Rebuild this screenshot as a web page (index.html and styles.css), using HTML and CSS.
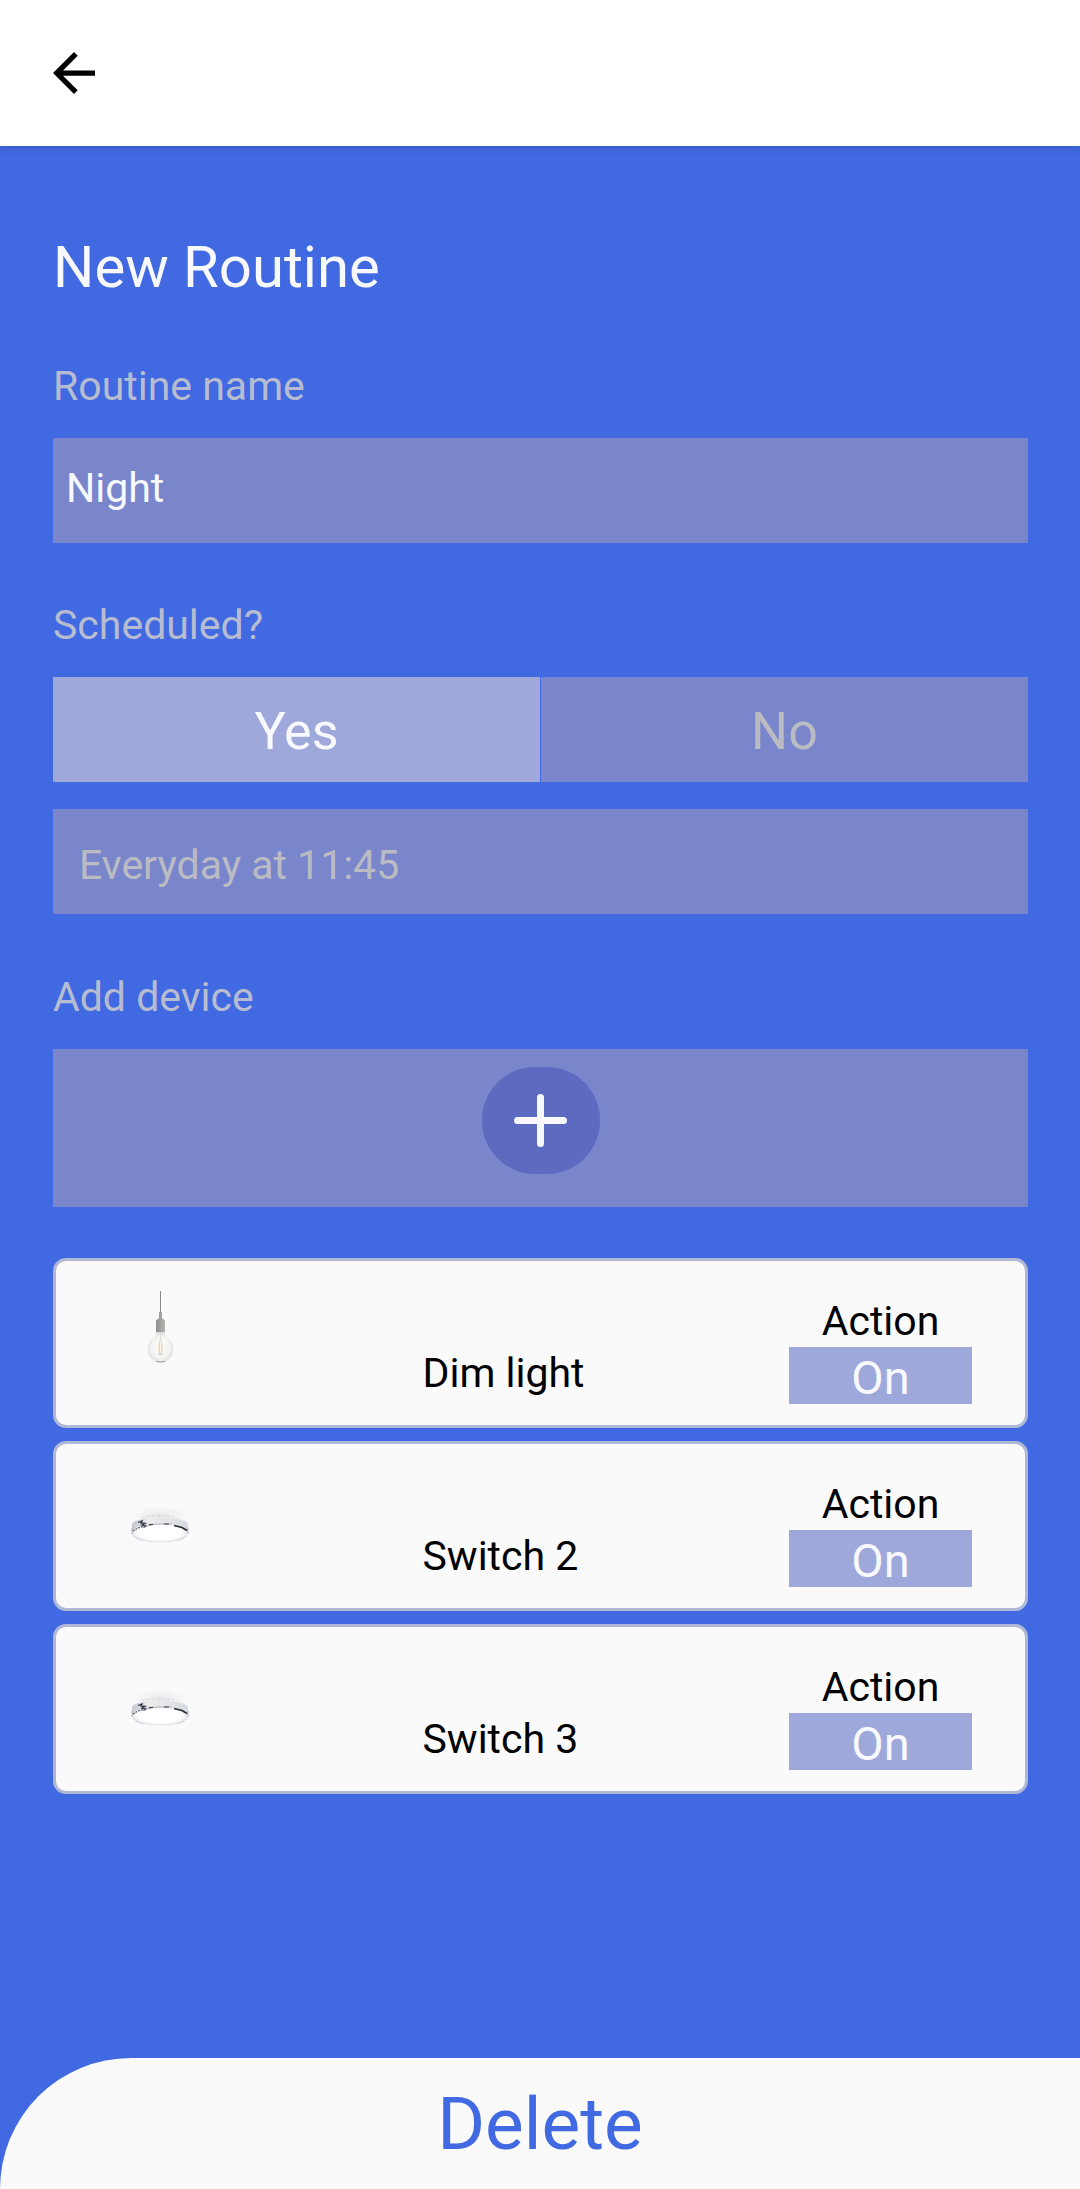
FILE: index.html
```html
<!DOCTYPE html>
<html lang="en">
<head>
<meta charset="utf-8">
<meta name="viewport" content="width=device-width, initial-scale=1">
<title>New Routine</title>
<link rel="stylesheet" href="styles.css">
</head>
<body>
<svg class="defs" aria-hidden="true">
  <defs>
    <linearGradient id="socket" x1="0" x2="1">
      <stop offset="0" stop-color="#8f8f8d"/><stop offset=".6" stop-color="#a5a5a3"/><stop offset="1" stop-color="#b4b4b2"/>
    </linearGradient>
    <radialGradient id="glass">
      <stop offset="0" stop-color="#fdfcf9"/><stop offset=".75" stop-color="#f4f4f3"/><stop offset="1" stop-color="#e2e3e3"/>
    </radialGradient>
    <linearGradient id="rim" x1="0" x2="1">
      <stop offset="0" stop-color="#c4c7ce"/><stop offset=".3" stop-color="#ececef"/><stop offset=".7" stop-color="#e2e4e8"/><stop offset="1" stop-color="#d5d8de"/>
    </linearGradient>
    <radialGradient id="halo">
      <stop offset="0" stop-color="#dedede"/><stop offset="1" stop-color="#fafafa"/>
    </radialGradient>
    <radialGradient id="disc">
      <stop offset="0" stop-color="#fff"/><stop offset=".75" stop-color="#fff"/><stop offset=".92" stop-color="#f1f2f4"/><stop offset="1" stop-color="#dfe3e8"/>
    </radialGradient>
    <symbol id="pendant" viewBox="0 0 72 72">
      <path d="M36.500 0V22" stroke="#8c8c8a" stroke-width="1"/>
      <path d="M35 21h3v6l3 2.500v12h-9v-12l3-2.500z" fill="url(#socket)"/>
      <path d="M32.500 41.500h8c0 3 .5 5 3 6.500 3.500 2 5.300 5.500 5.300 10 0 7.500-5 13-12.300 13s-12.300-5.500-12.300-13c0-4.500 1.800-8 5.300-10 2.500-1.500 3-3.500 3-6.500z" fill="url(#glass)" stroke="#dededd" stroke-width=".6"/>
      <path d="M36.500 42v8M35.500 50v12M37.500 50v12" stroke="#d3cfcb" stroke-width=".8" fill="none"/>
      <path d="M34.500 54v7M38.500 54v7" stroke="#f1dcc2" stroke-width=".8"/>
      <path d="M34.500 63h4" stroke="#b4b0ac" stroke-width="1"/>
      <path d="M32 70.500q4.500 1.200 9 0" stroke="#989898" stroke-width="1" fill="none"/>
    </symbol>
    <symbol id="ceiling" viewBox="0 0 72 72">
      <ellipse cx="36" cy="42" rx="27" ry="10" fill="url(#halo)" opacity=".7"/>
      <path d="M8 50.500q.5-3 8-5 20-4.500 40 0 8 2 8 5v8q-2 6-12 8.500-16 3-32 0Q10 64.500 8 58.500z" fill="url(#rim)"/>
      <ellipse cx="36" cy="58.500" rx="28" ry="9.500" fill="url(#disc)"/>
      <path d="M8 54v6M64 54v6" stroke="#9fa2b0" stroke-width=".8"/>
      <path d="M9 61.500q3 4 10 5.500M63 61.500q-3 4-10 5.500" fill="none" stroke="#b8bbc3" stroke-width=".8" stroke-dasharray="2 1.500"/>
      <path d="M14 48.500l4-1.500-1 2 4 .5-3 1.500 4 1-2.500 1.500" fill="none" stroke="#343747" stroke-width="1.300"/>
      <path d="M9 57l4-2.500M14 54l5-1.500" stroke="#555867" stroke-width="1.200" stroke-dasharray="2 1"/>
      <path d="M22 51.500q7-1.500 14-1.500h12" fill="none" stroke="#a8abb5" stroke-width="1"/>
      <path d="M25 50.800l4-.5M40 50h5" stroke="#3e404b" stroke-width="1.200"/>
      <path d="M50 51.500l8 2 5 3" fill="none" stroke="#252731" stroke-width="1.500"/>
      <path d="M18 43.500q18-3.500 36 0" fill="none" stroke="#c9ccd2" stroke-width=".7" stroke-dasharray="3 2"/>
    </symbol>
  </defs>
</svg>

<header class="topbar">
  <a class="back" href="#" aria-label="Back">
    <svg viewBox="4 4 16 16"><path d="M20 11H7.830l5.590-5.590L12 4l-8 8 8 8 1.410-1.410L7.830 13H20v-2z"/></svg>
  </a>
</header>

<main class="routine">
  <h1 class="title">New Routine</h1>

  <label class="label" for="name">Routine name</label>
  <input class="field field-name" id="name" type="text" value="Night">

  <p class="label" id="scheduled">Scheduled?</p>
  <div class="choice" role="group" aria-labelledby="scheduled">
    <button class="option option-selected" type="button" aria-pressed="true">Yes</button>
    <button class="option" type="button" aria-pressed="false">No</button>
  </div>
  <input class="field field-time" type="text" value="Everyday at 11:45" aria-label="Schedule" readonly>

  <p class="label">Add device</p>
  <div class="add-box">
    <button class="add" type="button" aria-label="Add device">
      <svg viewBox="0 0 53 53" stroke="#f8f8ff" stroke-width="7" stroke-linecap="round"><path d="M26.500 3.500v46M3.500 26.500h46"/></svg>
    </button>
  </div>

  <ul class="devices">
    <li class="device">
      <svg class="picture" aria-hidden="true"><use href="#pendant" width="72" height="72"/></svg>
      <span class="device-name">Dim light</span>
      <div class="action"><span class="action-label">Action</span><button class="toggle" type="button">On</button></div>
    </li>
    <li class="device">
      <svg class="picture" aria-hidden="true"><use href="#ceiling" width="72" height="72"/></svg>
      <span class="device-name">Switch 2</span>
      <div class="action"><span class="action-label">Action</span><button class="toggle" type="button">On</button></div>
    </li>
    <li class="device">
      <svg class="picture" aria-hidden="true"><use href="#ceiling" width="72" height="72"/></svg>
      <span class="device-name">Switch 3</span>
      <div class="action"><span class="action-label">Action</span><button class="toggle" type="button">On</button></div>
    </li>
  </ul>
</main>

<button class="delete" type="button">Delete</button>
</body>
</html>
```
FILE: styles.css
```css
* {
  box-sizing: border-box;
}

body {
  margin: 0;
  min-height: 100vh;
  display: flex;
  flex-direction: column;
  background: #4169e1;
  color: #000;
  font-family: Roboto, sans-serif;
  font-size: 41px;
  line-height: 50px;
}

button,
input {
  margin: 0;
  padding: 0;
  border: 0;
  border-radius: 0;
  font: inherit;
}

.defs {
  position: absolute;
  width: 0;
  height: 0;
}

.topbar {
  display: flex;
  align-items: center;
  height: 146px;
  padding: 0 53px;
  background: #fff;
  box-shadow: 0 1px 9px rgba(0, 0, 0, 0.18);
}

.back,
.back svg {
  display: block;
  width: 42px;
  height: 42px;
}

.routine {
  flex: 1;
  display: flex;
  flex-direction: column;
  padding: 87px 52px 53px 53px;
}

.title {
  margin: 0 0 3px;
  color: #f8f8ff;
  font-size: 58px;
  font-weight: 400;
  line-height: 68px;
}

.label {
  margin: 57px 0 27px;
  color: #b8bcd0;
}

.field {
  width: 100%;
  height: 105px;
  background: #7986cb;
}

.field-name {
  padding: 0 13px 6px;
  color: #f8f8ff;
}

.field-time {
  margin: 27px 0 1px;
  padding: 6px 26px 0;
  color: #bbbbc4;
}

.choice {
  display: grid;
  grid-template-columns: 1fr 1fr;
  gap: 1px;
}

.option {
  height: 105px;
  padding-top: 5px;
  background: #7986cb;
  color: #bbbbc4;
  font-size: 52px;
}

.option-selected {
  background: #9fa8da;
  color: #f8f8ff;
}

.add-box {
  display: flex;
  justify-content: center;
  padding: 18px 0 33px;
  background: #7986cb;
}

.add {
  display: grid;
  place-items: center;
  width: 118px;
  height: 107px;
  border-radius: 53px;
  background: #5c6bc0;
}

.add svg {
  width: 53px;
  height: 53px;
}

.devices {
  display: flex;
  flex-direction: column;
  gap: 13px;
  margin: 51px 0 0;
  padding: 0;
  list-style: none;
}

.device {
  display: grid;
  grid-template-columns: 1fr 1fr 183px;
  height: 170px;
  padding: 30px 53px 0 0;
  border: 3px solid #b0b8d8;
  border-radius: 13px;
  background: #fafafa;
}

.picture {
  width: 72px;
  height: 72px;
  margin-left: 68px;
}

.device-name {
  margin-top: 57px;
}

.action {
  display: flex;
  flex-direction: column;
  gap: 1px;
  padding-top: 5px;
  text-align: center;
}

.toggle {
  height: 57px;
  padding-top: 4px;
  background: #9fa8da;
  color: #f8f8ff;
  font-size: 47px;
}

.delete {
  height: 131px;
  border-top-left-radius: 131px;
  background: #fafafa;
  color: #4169e1;
  font-size: 73px;
}
```
